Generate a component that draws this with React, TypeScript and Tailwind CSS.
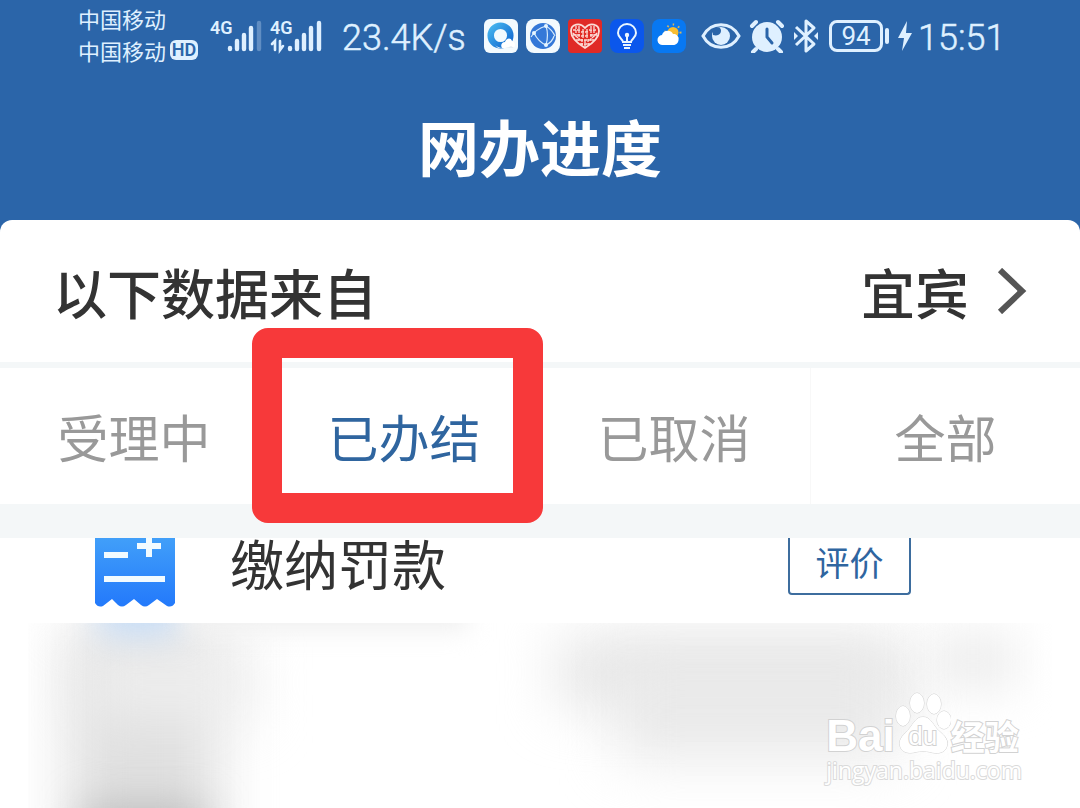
import React, { useState } from "react";

const TABS = ["受理中", "已办结", "已取消", "全部"];

function Signal({ weak, data }: { weak?: boolean; data?: boolean }) {
  return (
    <div className="relative w-[52px] h-9">
      <span className="absolute left-0 top-0 text-[18px] leading-5 font-semibold font-['Roboto']">
        4G
      </span>
      <svg viewBox="0 0 52 36" className="w-full h-full" fill="none" stroke="currentColor" strokeLinecap="round">
        <g strokeWidth="4.400">
          <path d="M20 31v-1M27 31v-8M34 31V17M41 31V10" />
          <path d="M49 31V5" opacity={weak ? 0.3 : 1} />
        </g>
        {data && <path d="M2 26l3-3v9M10 23v9l3-4" strokeWidth="2.600" />}
      </svg>
    </div>
  );
}

function AppIcons() {
  return (
    <div className="flex gap-2">
      <svg viewBox="0 0 34 34" className="w-[34px] h-[34px]">
        <defs>
          <linearGradient id="ring" x1="0" y1="0" x2="1" y2="1">
            <stop offset="0" stopColor="#45b4ee" />
            <stop offset="1" stopColor="#1268d0" />
          </linearGradient>
        </defs>
        <rect width="34" height="34" rx="6" fill="#f3fafe" />
        <circle cx="16.500" cy="16.500" r="9.800" fill="none" stroke="url(#ring)" strokeWidth="6.500" />
        <path d="M18 29c-2-3 0-6 3-6 1-4 6-5 7-1 4 1 4 7 0 7z" fill="#fff" />
        <path d="M10 25c4 5 12 5 17 2l3 2H14z" fill="#e4edf4" />
      </svg>
      <svg viewBox="0 0 34 34" className="w-[34px] h-[34px]">
        <rect width="34" height="34" rx="8" fill="#f3fafe" />
        <circle cx="17" cy="17" r="13" fill="#3478d8" />
        <g fill="none" stroke="#d5eafc" strokeWidth="1.200">
          <path d="M20 7C13 9 8 13 5 18M20 7c2 6 2 12 0 19M20 7c5 3 7 6 9 10M8 14c3 6 7 10 12 12M20 26c4-2 7-5 8-9" />
        </g>
        <g fill="#e6f5ff">
          <circle cx="20" cy="7" r="2" />
          <circle cx="8" cy="14" r="2" />
          <circle cx="20" cy="26" r="2" />
        </g>
      </svg>
      <svg viewBox="0 0 34 34" className="w-[34px] h-[34px]">
        <rect width="34" height="34" rx="4" fill="#e02a26" />
        <path
          d="M17 29C12 26 3 20 3 12c0-7 9-9 14-3 5-6 14-4 14 3 0 8-9 14-14 17z"
          fill="#e02a26"
          stroke="#fbdcd6"
          strokeWidth="1.800"
        />
        <path
          d="M5 11h8M21 11h8M5 16h7M22 16h7M8 21h18M12 25h10M8 7v11M11 7v16M23 7v16M26 7v11M14 20v6M17 21v7M20 20v6M13 13h8M13 17h8M15 10v9M19 10v9M5 14l7 7M29 14l-7 7"
          stroke="#fbdcd6"
          strokeWidth="1.300"
          strokeDasharray="3 1"
        />
      </svg>
      <svg viewBox="0 0 34 34" className="w-[34px] h-[34px]" fill="none">
        <rect width="34" height="34" rx="8" fill="#0b57ec" />
        <g stroke="#eaf6ff" strokeWidth="2">
          <path d="M13 23c0-3-5-4-5-9a9 9 0 0 1 18 0c0 5-5 6-5 9z" />
          <path d="M17 22v-6M13 26h8M14 29h6" />
        </g>
        <circle cx="17" cy="16" r="2.200" fill="#eaf6ff" />
      </svg>
      <svg viewBox="0 0 34 34" className="w-[34px] h-[34px]">
        <rect width="34" height="34" rx="8" fill="#0878f2" />
        <circle cx="21" cy="13" r="7.500" fill="none" stroke="#d9b65c" strokeWidth="2" strokeDasharray="1.500 4.300" />
        <circle cx="21" cy="13.500" r="5.500" fill="#f8bd31" />
        <path d="M11 26a5 5 0 0 1-1-10c1-5 9-6 11-1 7-1 8 11 0 11z" fill="#fff" />
      </svg>
    </div>
  );
}

function StatusBar() {
  return (
    <div className="flex items-center h-[72px] pl-[78px] text-[#dff0ff] whitespace-nowrap">
      <div className="pb-1 text-[22px] leading-8">
        <div>中国移动</div>
        <div className="flex items-center gap-1">
          中国移动
          <span className="w-7 h-5 rounded-md bg-[#dff0ff] text-[#2b65a9] text-[18px] leading-5 font-semibold text-center font-['Roboto']">
            HD
          </span>
        </div>
      </div>
      <div className="flex gap-2 ml-3">
        <Signal weak />
        <Signal data />
      </div>
      <span className="w-[141px] pl-5 pt-1 text-[36px] leading-10 font-['Roboto'] font-light [-webkit-text-stroke:0.5px]">
        23.4K/s
      </span>
      <div className="ml-[21px]">
        <AppIcons />
      </div>
      <div className="flex items-center gap-2 ml-[15px]">
        <svg viewBox="0 0 40 28" className="w-10 h-7" fill="none">
          <path d="M2 14C10-1 30-1 38 14C30 29 10 29 2 14z" stroke="currentColor" strokeWidth="3" />
          <circle cx="20" cy="14" r="9" fill="currentColor" />
          <path d="M12 8c2-2 5-3 7-2 3 4-1 9-7 7z" fill="#2b65a9" />
        </svg>
        <svg viewBox="0 0 36 34" className="w-9 h-[34px]" fill="none" stroke="currentColor" strokeLinecap="round">
          <circle cx="18" cy="18" r="15" fill="currentColor" stroke="none" />
          <path d="M3 7l4-4M33 7l-4-4M7 30l-3 3M29 30l3 3" strokeWidth="4" />
          <path d="M18 10v8l5 6" stroke="#2b65a9" strokeWidth="3" />
        </svg>
        <svg viewBox="0 0 26 36" className="w-[26px] h-9" fill="none" stroke="currentColor" strokeWidth="3">
          <path d="M3 9l18 17-8 7V3l8 7L3 27" strokeLinejoin="round" />
          <path d="M1 14v8l4-4zM25 14v8l-4-4z" fill="currentColor" stroke="none" />
        </svg>
      </div>
      <div className="flex items-center ml-[10px]">
        <span className="w-[54px] h-8 border-3 border-current rounded-lg text-center text-[26px] leading-[26px] font-['Roboto']">
          94
        </span>
        <span className="w-1 h-4 ml-[2px] rounded-sm bg-current" />
        <svg viewBox="0 0 16 30" className="w-4 h-[30px] ml-2" fill="currentColor">
          <path d="M10 0L1 17h6L5 30l10-18H9z" />
        </svg>
      </div>
      <span className="ml-[5px] pt-1 text-[36px] leading-10 font-['Roboto'] font-light [-webkit-text-stroke:0.5px]">
        15:51
      </span>
    </div>
  );
}

function BillIcon() {
  return (
    <svg viewBox="0 0 80 70" className="w-20 h-[70px]">
      <defs>
        <linearGradient id="bill" x1="0" y1="0" x2="0" y2="1">
          <stop offset="0" stopColor="#419ff9" />
          <stop offset="1" stopColor="#2379fb" />
        </linearGradient>
      </defs>
      <path
        d="M0 0h80v65q-3 5-8 3l-10-7-8 6q-4 3-8 0l-7-6-8 6q-4 3-8 0l-6-6-9 7q-5 2-8-3z"
        fill="url(#bill)"
      />
      <path d="M9 17h24M9 41h61M42 8h24M54 0v19" stroke="#f2fbff" strokeWidth="6" />
    </svg>
  );
}

function Watermark() {
  return (
    <div className="absolute right-[58px] bottom-[22px] text-white whitespace-nowrap [paint-order:stroke]">
      <div className="flex items-end h-[62px] [-webkit-text-stroke:2px_#d2d2d2]">
        <span className="text-[44px] leading-[46px] -mb-[5px] font-bold font-['Liberation_Sans']">Bai</span>
        <div className="relative w-14 h-[62px]">
          <svg viewBox="0 0 56 62" className="w-full h-full" fill="#fff" stroke="#d2d2d2">
            <ellipse cx="8" cy="24" rx="7" ry="10" />
            <ellipse cx="22" cy="11" rx="7" ry="10" />
            <ellipse cx="39" cy="12" rx="7" ry="10" />
            <ellipse cx="49" cy="28" rx="7" ry="9" />
            <path d="M28 25c7 0 9 6 14 12 5 5 12 9 10 17-2 8-11 8-17 6-5-1-9-1-14 0-7 2-14 1-16-6-2-8 5-12 9-17 5-6 7-12 14-12z" />
          </svg>
          <span className="absolute inset-x-0 bottom-1 text-center text-[26px] leading-7 font-['Liberation_Sans']">
            du
          </span>
        </div>
        <span className="text-[34px] leading-9 font-bold">经验</span>
      </div>
      <div className="text-[23px] leading-8 font-['Open_Sans'] [-webkit-text-stroke:2px_#dadada]">
        jingyan.baidu.com
      </div>
    </div>
  );
}

export default function App() {
  const [active, setActive] = useState("已办结");

  return (
    <div className="min-h-screen flex flex-col bg-[#2b65a9] font-['Noto_Sans_CJK_SC',sans-serif]">
      <header>
        <StatusBar />
        <h1 className="h-[148px] text-center text-white text-[61px] leading-[148px] font-bold">
          网办进度
        </h1>
      </header>

      <main className="flex-1 flex flex-col bg-white rounded-t-xl">
        {/* Data source */}
        <div className="flex items-center justify-between h-[142px] px-[53px] text-[54px] font-medium text-[#333]">
          <span>以下数据来自</span>
          <button className="flex items-center gap-7 font-medium">
            宜宾
            <svg viewBox="0 0 30 46" className="w-[30px] h-[46px]" fill="none" stroke="#555" strokeWidth="6">
              <path d="M3 2l22 21L3 44" />
            </svg>
          </button>
        </div>

        {/* Tabs */}
        <nav className="grid grid-cols-4 h-[176px] border-t-6 border-b-34 border-[#f4f7f8]">
          {TABS.map((tab) => (
            <button
              key={tab}
              onClick={() => setActive(tab)}
              className={`relative pr-[2px] text-[51px] leading-none last:pr-0 last:border-l last:border-[#f8f8f8] ${
                tab === active ? "text-[#2f659f]" : "text-[#999]"
              }`}
            >
              {tab}
              {tab === active && (
                <span className="absolute -left-[18px] -right-[3px] -top-10 -bottom-[19px] border-30 border-[#f7393a] rounded-2xl" />
              )}
            </button>
          ))}
        </nav>

        {/* Record, scrolled partly under the tabs */}
        <div className="flex items-start h-[85px] pl-[95px] pr-[169px] overflow-hidden">
          <BillIcon />
          <span className="ml-[55px] text-[54px] leading-[50px] text-[#333]">缴纳罚款</span>
          <button className="flex items-start justify-center ml-auto w-[123px] h-[57px] border-2 border-t-0 border-[#3d6d9e] rounded-b-sm text-[34px] leading-[48px] text-[#2f659f]">
            评价
          </button>
        </div>

        {/* Hidden personal data */}
        <div className="relative flex-1 min-h-[185px] overflow-hidden">
          <div className="absolute inset-y-0 left-7 right-7 overflow-hidden">
            <div className="absolute left-10 top-0 w-[150px] h-[240px] bg-[#e0e0e0] blur-[28px]" />
            <div className="absolute left-14 top-6 w-[170px] h-[70px] bg-[#eeeeee] blur-[28px]" />
            <div className="absolute left-14 top-[182px] w-[120px] h-[60px] bg-[#bcbcbc] blur-[20px]" />
            <div className="absolute left-[72px] -top-12 w-[76px] h-[60px] bg-[#c6dcf6] blur-[16px]" />
            <div className="absolute left-[160px] -top-8 w-[280px] h-10 bg-[#f0f0f0] blur-[12px]" />
            <div className="absolute left-[530px] top-4 w-[350px] h-[66px] bg-[#e5e5e5] blur-[28px]" />
            <div className="absolute left-[590px] top-10 w-[280px] h-[96px] bg-[#e9e9e9] blur-[28px]" />
            <div className="absolute left-[900px] top-2 w-[90px] h-[60px] bg-[#efefef] blur-[22px]" />
          </div>
          <Watermark />
        </div>
      </main>
    </div>
  );
}
